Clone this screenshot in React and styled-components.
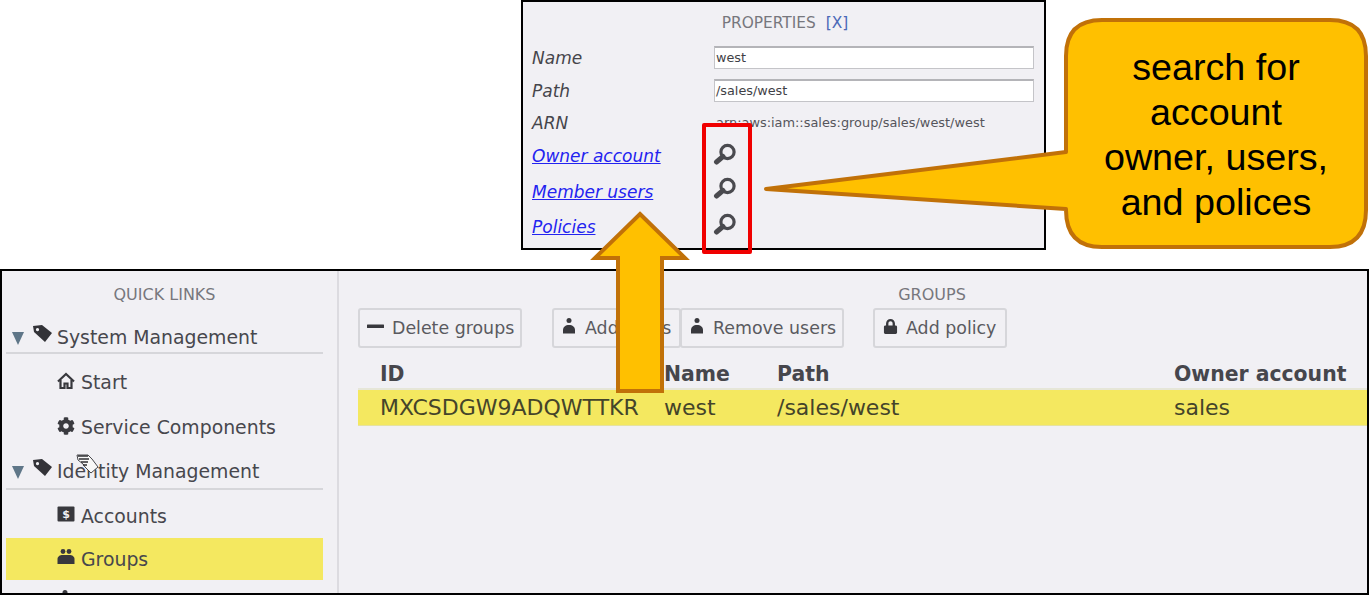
import React from "react";
import styled, { createGlobalStyle } from "styled-components";
import { FaCog, FaLock } from "react-icons/fa";

const GlobalStyle = createGlobalStyle`
  html, body {
    margin: 0;
    padding: 0;
    background: #fff;
    overflow: hidden;
  }
`;

const Page = styled.div`
  position: relative;
  width: 1369px;
  height: 595px;
  overflow: hidden;
  background: #fff;
  font-family: "DejaVu Sans", sans-serif;
  color: #3f3f46;
`;

const PropertiesPanel = styled.section`
  box-sizing: border-box;
  width: 525px;
  height: 250px;
  margin: 0 0 19px 521px;
  padding: 13px 9px 0;
  background: #f1f0f4;
  border: 2px solid #000;
`;

const PanelTitle = styled.div`
  text-align: center;
  font-size: 15.4px;
  line-height: 16px;
  color: #77777d;
  margin-bottom: 10px;
  padding-left: 3px;
`;

const CloseLink = styled.span`
  color: #4a69b8;
  margin-left: 10px;
`;

const PropRow = styled.div`
  display: grid;
  grid-template-columns: 182px 320px;
  align-items: center;
  height: ${({ $h }) => $h}px;
`;

const PropLabel = styled.span`
  font-size: 17px;
  font-style: italic;
  color: #45454b;
`;

const PropLink = styled(PropLabel).attrs({ as: "a" })`
  color: #2323f0;
  text-decoration: underline;
`;

const PropInput = styled.div`
  box-sizing: border-box;
  height: 23px;
  padding-left: 1px;
  background: #fff;
  border: 1px solid #c4c4c8;
  border-top: 2px solid #b4b4b8;
  font-size: 12.8px;
  line-height: 19px;
  color: #3f3f46;
`;

const PropValue = styled.span`
  padding-left: 2px;
  font-size: 12.9px;
  color: #55555b;
  white-space: nowrap;
`;

const SearchBtn = styled.svg`
  display: block;
  width: 24px;
  height: 24px;
  margin: -${({ $lift }) => $lift}px 0 0 -1px;
`;

const MainPanel = styled.section`
  box-sizing: border-box;
  display: flex;
  width: 1369px;
  height: 326px;
  background: #f1f0f4;
  border: 2px solid #000;
  overflow: hidden;
`;

const Sidebar = styled.nav`
  flex: 0 0 337px;
  box-sizing: border-box;
  padding: 0 14px 0 4px;
  border-right: 2px solid #dcdbe0;
  height: 324px;
`;

const SectionTitle = styled.div`
  height: 36px;
  line-height: 48px;
  text-align: center;
  font-size: 16px;
  color: #77777d;
`;

const SidebarHeading = styled.div`
  display: flex;
  align-items: center;
  box-sizing: border-box;
  height: ${({ $h }) => $h}px;
  padding-top: ${({ $pt }) => $pt}px;
  border-bottom: 2px solid #d6d6da;
  font-size: 18.85px;
  color: #47474d;
  white-space: nowrap;
`;

const Caret = styled.i`
  width: 0;
  height: 0;
  margin: 2px 9px 0 6px;
  border-left: 6.5px solid transparent;
  border-right: 6.5px solid transparent;
  border-top: 13px solid #5f7688;
`;

const TagGlyph = styled.svg`
  display: block;
  flex: none;
  width: 19px;
  height: 18px;
  margin: -6px 5px 0 0;
  color: #333338;
`;

const ItemGroup = styled.div`
  padding-top: 6px;
`;

const SidebarItem = styled.div`
  display: flex;
  align-items: ${({ $clip }) => ($clip ? "flex-start" : "center")};
  box-sizing: border-box;
  height: ${({ $h }) => $h}px;
  padding: ${({ $pt }) => $pt || 0}px 0 0 51px;
  font-size: 18.85px;
  color: #47474d;
  white-space: nowrap;
  background: ${({ $active }) => ($active ? "#f4e860" : "transparent")};
`;

const ItemIcon = styled.span`
  display: inline-flex;
  width: 24px;
  flex: none;
  color: #3a3a3f;
  margin-top: -4px;
`;

const Content = styled.div`
  flex: 1;
  padding-left: 19px;
  min-width: 0;
`;

const GroupsTitle = styled(SectionTitle)`
  width: 1148px;
  height: 37px;
`;

const Toolbar = styled.div`
  display: flex;
  height: 40px;
`;

const ToolButton = styled.div`
  box-sizing: border-box;
  display: flex;
  align-items: center;
  gap: 8px;
  width: ${({ $w }) => $w}px;
  height: 40px;
  margin-left: ${({ $ml }) => $ml || 0}px;
  padding-left: ${({ $pl }) => $pl || 7}px;
  border: 2px solid #d6d6da;
  border-radius: 3px;
  font-size: 17.4px;
  color: #5a5a60;
  white-space: nowrap;
  background: #f1f0f4;

  > svg {
    margin-top: -4px;
  }
`;

const GlyphSvg = styled.svg`
  display: block;
  flex: none;
  width: ${({ $s }) => $s}px;
  height: ${({ $s }) => $s}px;
  color: #38383d;
`;

const GridRow = styled.div`
  display: grid;
  grid-template-columns: 284px 113px 397px 1fr;
  padding-left: 22px;
  align-items: center;
  white-space: nowrap;
`;

const HeadRow = styled(GridRow)`
  height: 42px;
  padding-top: 12px;
  box-sizing: border-box;
  font-size: 20.4px;
  font-weight: bold;
  color: #46464c;
  border-bottom: 2px solid #e6e6d8;
`;

const DataRow = styled(GridRow)`
  box-sizing: border-box;
  height: 36px;
  font-size: 22px;
  color: #44442a;
  background: #f4e860;
  border-bottom: 1px solid #e6e2a0;
`;

const Overlay = styled.div`
  position: absolute;
  left: ${({ $x }) => $x}px;
  top: ${({ $y }) => $y}px;
`;

const RedBox = styled(Overlay)`
  box-sizing: border-box;
  width: 50px;
  height: 131px;
  border: 4px solid #f00000;
  border-radius: 2px;
`;

const CalloutText = styled.div`
  position: absolute;
  left: 302px;
  top: 29px;
  width: 304px;
  text-align: center;
  font-family: "Liberation Sans", Arial, sans-serif;
  font-size: 37.7px;
  line-height: 45px;
  color: #000;
`;

const Search = ({ lift }) => (
  <SearchBtn $lift={lift} viewBox="0 0 24 24">
    <circle cx="14.5" cy="9" r="6.6" fill="none" stroke="#4a4a4f" strokeWidth="3.2" />
    <path d="M10 13.5 L3.5 19" stroke="#4a4a4f" strokeWidth="5" strokeLinecap="round" />
  </SearchBtn>
);

const Tag = () => (
  <TagGlyph viewBox="0 0 19 18">
    <path
      fillRule="evenodd"
      fill="currentColor"
      d="M0 1 L9 0 L19 8 L12 17 L1 7 Z M4.5 3 a1.6 1.6 0 1 0 0.01 0 Z"
    />
  </TagGlyph>
);

const Person = () => (
  <GlyphSvg $s={16} viewBox="0 0 16 16" fill="currentColor">
    <circle cx="8" cy="2.6" r="2.5" />
    <path d="M2 15.5 V12 C2 9 4.5 7 8 7 C11.5 7 14 9 14 12 V15.5 Z" />
  </GlyphSvg>
);

const Minus = () => (
  <GlyphSvg $s={17} viewBox="0 0 17 17" fill="currentColor">
    <rect x="0" y="6.5" width="17" height="3.5" rx="0.5" />
  </GlyphSvg>
);

const Home = () => (
  <GlyphSvg $s={18} viewBox="0 0 18 18" fill="none" stroke="currentColor" strokeWidth="2.2">
    <path d="M1 9.5 L9 2 L17 9.5" />
    <path d="M3.5 8 V16 H7.5 V11.5 H10.5 V16 H14.5 V8" />
  </GlyphSvg>
);

const Money = () => (
  <GlyphSvg $s={18} viewBox="0 0 18 18">
    <rect x="0.5" y="1.5" width="17" height="15" rx="1" fill="currentColor" />
    <text x="9" y="13" textAnchor="middle" fontSize="11" fontWeight="bold" fill="#f1f0f4" fontFamily="DejaVu Sans">$</text>
  </GlyphSvg>
);

const People = () => (
  <GlyphSvg $s={18} viewBox="0 0 18 18" fill="currentColor">
    <circle cx="6" cy="3.5" r="2.4" />
    <circle cx="12" cy="3.5" r="2.4" />
    <path d="M0.5 16 V11 C0.5 8.5 3 7 5.5 7 H12.5 C15 7 17.5 8.5 17.5 11 V16 Z" />
  </GlyphSvg>
);

const Cursor = () => (
  <svg width="24" height="22" viewBox="0 0 24 22">
    <path d="M2 1 H13 L17 5 L23 13 L16 19 L10 13 L8 10 L3 6 Z" fill="#f8f8f8" stroke="#48484c" strokeWidth="1" />
    <path d="M3 2 H13 M4 5 H14 M6 8 H13 M8 11 H12" stroke="#2f2f33" strokeWidth="1.6" />
  </svg>
);

const Callout = () => (
  <Overlay $x={762} $y={16}>
    <svg width="607" height="236" viewBox="0 0 607 236" style={{ display: "block" }}>
      <path
        d="M304 40 Q304 4 340 4 H568 Q604 4 604 40 V194 Q604 231 568 231 H340 Q304 231 304 194 V193 L4 173 L304 136 Z"
        fill="#ffc000"
        stroke="#c17108"
        strokeWidth="4"
        strokeLinejoin="round"
      />
    </svg>
    <CalloutText>
      search for
      <br />
      account
      <br />
      owner, users,
      <br />
      and polices
    </CalloutText>
  </Overlay>
);

const UpArrow = () => (
  <Overlay $x={588} $y={206}>
    <svg width="104" height="190" viewBox="0 0 104 190" style={{ display: "block" }}>
      <path
        d="M52 8 L97 52 H74 V185 H30 V52 H7 Z"
        fill="#ffc000"
        stroke="#c17108"
        strokeWidth="4"
        strokeLinejoin="miter"
      />
    </svg>
  </Overlay>
);

const App = () => (
  <Page>
    <GlobalStyle />
    <PropertiesPanel>
      <PanelTitle>
        PROPERTIES<CloseLink>[X]</CloseLink>
      </PanelTitle>
      <PropRow $h={33}>
        <PropLabel>Name</PropLabel>
        <PropInput>west</PropInput>
      </PropRow>
      <PropRow $h={33}>
        <PropLabel>Path</PropLabel>
        <PropInput>/sales/west</PropInput>
      </PropRow>
      <PropRow $h={31}>
        <PropLabel>ARN</PropLabel>
        <PropValue>arn:aws:iam::sales:group/sales/west/west</PropValue>
      </PropRow>
      <PropRow $h={35}>
        <PropLink>Owner account</PropLink>
        <Search lift={1} />
      </PropRow>
      <PropRow $h={37}>
        <PropLink>Member users</PropLink>
        <Search lift={5} />
      </PropRow>
      <PropRow $h={33}>
        <PropLink>Policies</PropLink>
        <Search lift={3} />
      </PropRow>
    </PropertiesPanel>

    <MainPanel>
      <Sidebar>
        <SectionTitle>QUICK LINKS</SectionTitle>
        <SidebarHeading $h={47} $pt={15}>
          <Caret />
          <Tag />
          System Management
        </SidebarHeading>
        <ItemGroup>
          <SidebarItem $h={45}>
            <ItemIcon><Home /></ItemIcon>
            Start
          </SidebarItem>
          <SidebarItem $h={45}>
            <ItemIcon><FaCog size={18} /></ItemIcon>
            Service Components
          </SidebarItem>
        </ItemGroup>
        <SidebarHeading $h={40} $pt={4}>
          <Caret />
          <Tag />
          Identity Management
        </SidebarHeading>
        <SidebarItem $h={48} $pt={4}>
          <ItemIcon><Money /></ItemIcon>
          Accounts
        </SidebarItem>
        <SidebarItem $h={42} $active>
          <ItemIcon><People /></ItemIcon>
          Groups
        </SidebarItem>
        <SidebarItem $h={15} $pt={14} $clip>
          <ItemIcon><Person /></ItemIcon>
        </SidebarItem>
      </Sidebar>
      <Content>
        <GroupsTitle>GROUPS</GroupsTitle>
        <Toolbar>
          <ToolButton $w={164}>
            <Minus />
            Delete groups
          </ToolButton>
          <ToolButton $w={129} $ml={30}>
            <Person />
            Add users
          </ToolButton>
          <ToolButton $w={164} $ml={-1}>
            <Person />
            Remove users
          </ToolButton>
          <ToolButton $w={134} $ml={29} $pl={8}>
            <FaLock size={15} color="#38383d" />
            Add policy
          </ToolButton>
        </Toolbar>
        <HeadRow>
          <span>ID</span>
          <span>Name</span>
          <span>Path</span>
          <span>Owner account</span>
        </HeadRow>
        <DataRow>
          <span>MXCSDGW9ADQWTTKR</span>
          <span>west</span>
          <span>/sales/west</span>
          <span>sales</span>
        </DataRow>
      </Content>
    </MainPanel>

    <RedBox $x={702} $y={123} />
    <Overlay $x={75} $y={454}>
      <Cursor />
    </Overlay>
    <UpArrow />
    <Callout />
  </Page>
);

export default App;
